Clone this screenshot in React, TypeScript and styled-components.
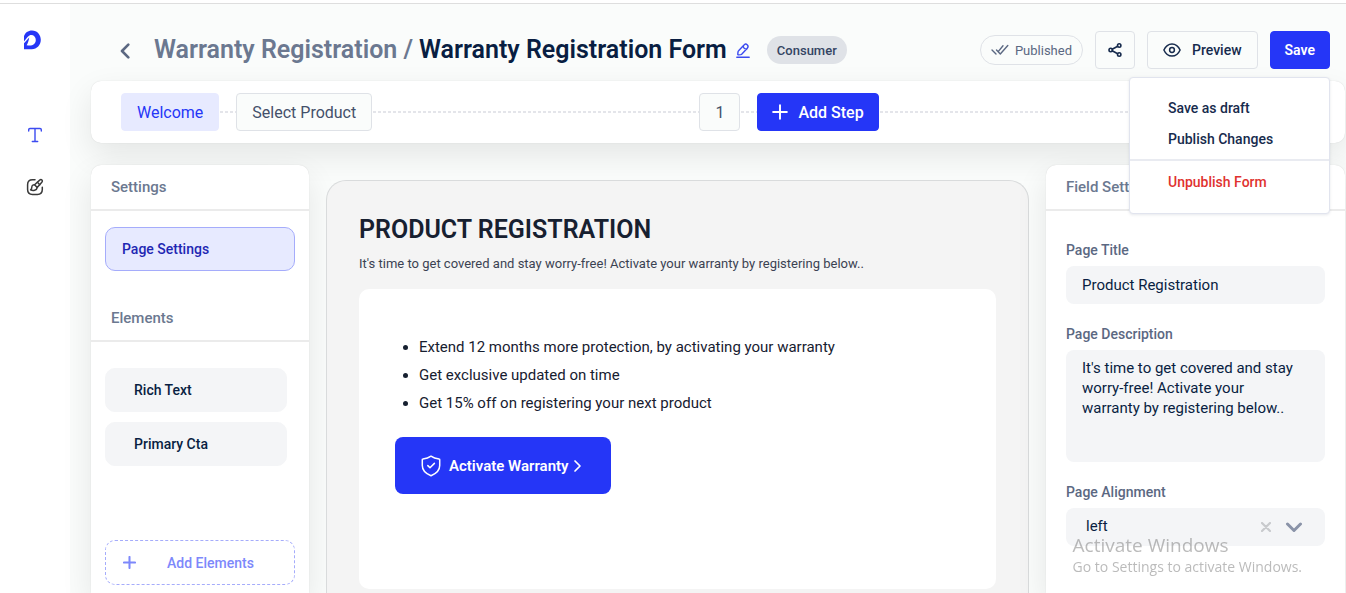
import React, { useState } from "react";
import styled, { createGlobalStyle, css } from "styled-components";

const GlobalStyle = createGlobalStyle`
  *, *::before, *::after { box-sizing: border-box; }
  body {
    margin: 0;
    background: #f5f5f5;
    font-family: Roboto, "Liberation Sans", sans-serif;
    color: #172b4d;
    overflow: hidden;
  }
  button, input, textarea, select { font-family: inherit; margin: 0; }
  h1, h2, h3, p, ul { margin: 0; padding: 0; }
`;

const Page = styled.div`
  height: 100vh;
  display: flex;
  flex-direction: column;
  background: #fff;
`;

const TopLine = styled.div`
  flex: none;
  height: 4px;
  border-bottom: 1px solid #dedede;
`;

const Shell = styled.div`
  flex: 1;
  min-height: 0;
  display: flex;
`;

const Sidebar = styled.nav`
  flex: none;
  width: 70px;
  padding-top: 26px;
  display: flex;
  flex-direction: column;
  align-items: center;
  background: #fff;
`;

const LogoLink = styled.a`
  display: block;
  height: 20px;
  margin-bottom: 73px;
  padding-right: 4px;
`;

const NavButton = styled.button<{ $active?: boolean }>`
  width: 24px;
  height: 24px;
  margin-bottom: 28px;
  padding: 0;
  display: grid;
  place-items: center;
  border: 0;
  background: none;
  color: ${(p) => (p.$active ? "#3c4bf0" : "#3a3a3a")};
`;

const Main = styled.main`
  flex: 1;
  min-width: 0;
  padding: 0 1px 0 21px;
  display: flex;
  flex-direction: column;
  background: #fafcfb;
`;

const Header = styled.header`
  flex: none;
  padding: 27px 15px 12px 29px;
  display: flex;
  align-items: center;
  justify-content: space-between;
`;

const Crumbs = styled.div`
  display: flex;
  align-items: center;
`;

const IconButton = styled.button`
  padding: 0;
  display: grid;
  place-items: center;
  border: 0;
  background: none;
  color: #5b6882;
`;

const BackButton = styled(IconButton)`
  margin: 2px 24px 0 0;
  width: 10px;
`;

const EditButton = styled(IconButton)`
  margin: 0 17px 0 9px;
  color: #3c4bf0;
`;

const CrumbLink = styled.a`
  margin-right: 6px;
  font-size: 25px;
  line-height: 32px;
  font-weight: 600;
  color: #6b7890;
  text-decoration: none;
  white-space: nowrap;
`;

const Title = styled.h1`
  font-size: 25px;
  line-height: 32px;
  font-weight: 600;
  color: #091e42;
  white-space: nowrap;
`;

const Tag = styled.span`
  height: 28px;
  padding: 0 10px;
  display: flex;
  align-items: center;
  border-radius: 14px;
  background: #dfe2e7;
  font-size: 13px;
  font-weight: 500;
  color: #344563;
`;

const Actions = styled.div`
  position: relative;
  display: flex;
  align-items: center;
  gap: 12px;
`;

const Status = styled.span`
  height: 30px;
  padding: 0 10px;
  display: flex;
  align-items: center;
  gap: 6px;
  border: 1px solid #dfe2e7;
  border-radius: 15px;
  font-size: 13px;
  color: #5b6882;
`;

const ActionButton = styled.button<{ $primary?: boolean }>`
  height: 38px;
  min-width: 40px;
  padding: 0 14px;
  display: flex;
  align-items: center;
  justify-content: center;
  gap: 10px;
  border: 1px solid ${(p) => (p.$primary ? "#2536f7" : "#dfe2e7")};
  border-radius: 4px;
  background: ${(p) => (p.$primary ? "#2536f7" : "#fafcfb")};
  color: ${(p) => (p.$primary ? "#fff" : "#172b4d")};
  font-size: 14px;
  font-weight: ${(p) => (p.$primary ? 600 : 500)};
`;

const ShareButton = styled(ActionButton)`
  padding: 0;
`;

const PreviewButton = styled(ActionButton)`
  padding: 0 15px;
  gap: 11px;
`;

const Menu = styled.div`
  position: absolute;
  top: calc(100% + 8px);
  right: 0;
  z-index: 5;
  width: 201px;
  padding: 14px 0 16px;
  border: 1px solid #e1e4ee;
  border-radius: 4px;
  background: #fff;
  box-shadow: 0 1px 3px rgba(9, 30, 66, 0.1);
`;

const MenuItem = styled.button<{ $danger?: boolean }>`
  display: block;
  width: 100%;
  height: 31px;
  padding: 0 38px;
  border: 0;
  background: none;
  text-align: left;
  font-size: 14px;
  font-weight: 500;
  color: ${(p) => (p.$danger ? "#e0322f" : "#172b4d")};
`;

const MenuRule = styled.hr`
  height: 2px;
  margin: 5px 0;
  border: 0;
  background: #e9ebf1;
`;

const surface = css`
  background: #fff;
  box-shadow: 0 0 1px rgba(0, 0, 0, 0.16), 0 12px 32px rgba(0, 0, 0, 0.09);
`;

const Stepper = styled.section`
  ${surface}
  flex: none;
  height: 62px;
  padding: 0 30px;
  display: flex;
  align-items: center;
  border-radius: 10px;
`;

const Step = styled.button<{ $kind?: "active" | "add" }>`
  flex: none;
  height: 38px;
  padding: 0 15px;
  display: flex;
  align-items: center;
  gap: 10px;
  border: 1px solid #dfe2e7;
  border-radius: 4px;
  background: #fafcfb;
  color: #44506a;
  font-size: 16px;
  font-weight: 400;
  ${(p) =>
    p.$kind === "active" &&
    css`
      border-color: #e7eaff;
      background: #e7eaff;
      color: #2536f7;
    `}
  ${(p) =>
    p.$kind === "add" &&
    css`
      padding: 0 14px;
      border-color: #2536f7;
      background: #2536f7;
      color: #fff;
      font-weight: 500;
    `}
`;

const Dashes = styled.span<{ $grow?: number }>`
  flex: ${(p) => (p.$grow ? `${p.$grow} 1 0` : "0 0 17px")};
  height: 2px;
  background: repeating-linear-gradient(90deg, transparent 0 1px, #e4e5ea 1px 4px, transparent 4px 5px);
`;

const Workspace = styled.div`
  flex: 1;
  min-height: 0;
  padding-top: 22px;
  display: flex;
  align-items: stretch;
  gap: 17px;
`;

const Panel = styled.aside<{ $width: number }>`
  ${surface}
  flex: none;
  width: ${(p) => p.$width}px;
  display: flex;
  flex-direction: column;
  border-radius: 10px 10px 0 0;
  overflow: hidden;
`;

const PanelHeading = styled.h2`
  flex: none;
  height: 46px;
  padding: 0 20px;
  display: flex;
  align-items: center;
  border-bottom: 2px solid #ebebeb;
  font-size: 15px;
  font-weight: 500;
  color: #6b7890;
`;

const PanelSection = styled.div<{ $top: number; $bottom: number }>`
  padding: ${(p) => p.$top}px 14px ${(p) => p.$bottom}px;
  display: flex;
  flex-direction: column;
  gap: 10px;
`;

const ItemButton = styled.button<{ $selected?: boolean }>`
  height: 44px;
  margin-right: ${(p) => (p.$selected ? 0 : 8)}px;
  padding: 0 ${(p) => (p.$selected ? 16 : 28)}px;
  border: 1px solid ${(p) => (p.$selected ? "#a5acfb" : "#f4f5f7")};
  border-radius: 10px;
  background: ${(p) => (p.$selected ? "#e7eaff" : "#f4f5f7")};
  color: ${(p) => (p.$selected ? "#1f27b3" : "#091e42")};
  text-align: left;
  font-size: 14px;
  font-weight: 500;
`;

const AddElements = styled.button`
  height: 45px;
  padding: 0 17px;
  display: flex;
  align-items: center;
  gap: 31px;
  border: 1px dashed #a5acfb;
  border-radius: 10px;
  background: none;
  color: #7d88fb;
  font-size: 14px;
  font-weight: 500;
`;

const Canvas = styled.section`
  flex: 1;
  min-width: 0;
  margin-top: 15px;
  padding: 33px 32px 0;
  border: 1px solid #d9dbdc;
  border-bottom: 0;
  border-radius: 20px 20px 0 0;
  background: #f4f4f4;
  overflow: hidden;
`;

const CanvasTitle = styled.h2`
  font-size: 25px;
  line-height: 32px;
  font-weight: 600;
  color: #172030;
`;

const CanvasText = styled.p`
  margin: 8px 0 15px;
  font-size: 13px;
  line-height: 20px;
  color: #3b4252;
`;

const FormCard = styled.div`
  min-height: 300px;
  padding: 44px 36px;
  border-radius: 10px;
  background: #fff;
`;

const Benefits = styled.ul`
  margin-bottom: 20px;
  padding-left: 24px;
  font-size: 15px;
  line-height: 28px;
  color: #172030;
`;

const ActivateButton = styled.button`
  height: 57px;
  padding: 0 26px;
  display: flex;
  align-items: center;
  gap: 8px;
  border: 0;
  border-radius: 8px;
  background: #2536f7;
  color: #fff;
  font-size: 15px;
  font-weight: 600;
  svg:last-child { margin: 0 2px 0 -6px; }
`;

const Fields = styled.form`
  padding: 29px 20px;
  display: flex;
  flex-direction: column;
  gap: 20px;
`;

const Field = styled.div`
  display: flex;
  flex-direction: column;
  gap: 6px;
`;

const Label = styled.label`
  font-size: 14px;
  line-height: 20px;
  font-weight: 500;
  color: #5b6882;
`;

const control = css`
  width: 100%;
  border: 0;
  border-radius: 8px;
  background: #f4f5f7;
  color: #091e42;
  font-size: 15px;
  outline: none;
`;

const TextInput = styled.input`
  ${control}
  height: 38px;
  padding: 0 16px;
`;

const TextArea = styled.textarea`
  ${control}
  display: block;
  height: 112px;
  padding: 8px 24px 8px 16px;
  line-height: 20px;
  resize: none;
`;

const SelectWrap = styled.div`
  position: relative;
`;

const Select = styled.select`
  ${control}
  height: 38px;
  padding: 0 20px 3px;
  appearance: none;
`;

const SelectIcons = styled.div`
  position: absolute;
  top: 0;
  right: 22px;
  height: 38px;
  display: flex;
  align-items: center;
  gap: 14px;
  color: #8a93a8;
  pointer-events: none;
`;

const ClearButton = styled(IconButton)`
  color: #c8cacd;
  pointer-events: auto;
`;

const Watermark = styled.div`
  position: fixed;
  right: 44px;
  bottom: 16px;
  z-index: 4;
  pointer-events: none;
  font-family: "Open Sans", "Noto Sans", sans-serif;
  color: rgba(120, 120, 120, 0.5);
  white-space: nowrap;
`;

const WatermarkTitle = styled.p`
  font-size: 19px;
  line-height: 24px;
`;

const WatermarkText = styled.p`
  font-size: 14px;
  line-height: 20px;
`;

type IconProps = {
  w: number;
  h?: number;
  box: string;
  stroke?: number;
  children: React.ReactNode;
};

const Icon = ({ w, h = w, box, stroke = 1.5, children }: IconProps) => (
  <svg
    width={w}
    height={h}
    viewBox={box}
    fill="none"
    stroke="currentColor"
    strokeWidth={stroke}
    strokeLinecap="round"
    strokeLinejoin="round"
    aria-hidden="true"
  >
    {children}
  </svg>
);

const Logo = () => (
  <svg width="18" height="20" viewBox="0 0 18 20" aria-hidden="true">
    <path
      fill="#2536f7"
      fillRule="evenodd"
      d="M0 19.200V6C1.200 2.600 4 .4 8 .4c5.200 0 8.800 4.200 8.800 9.400 0 5.400-3.800 9.400-9 9.400ZM0 13.200 5.200 7.400C4.800 10.600 3.900 13.200 2.600 15.200 8 16.400 11.800 14.400 11.800 10 11.800 7 9.900 5 7.200 5 5.200 5 4.200 6.200 0 11.400Z"
    />
  </svg>
);

const TextIcon = () => (
  <Icon w={16} box="0 0 16 16" stroke={1.4}>
    <path d="M1.700 4V2.800c0-.8.5-1.300 1.300-1.300h10c.8 0 1.300.5 1.300 1.300V4M8 1.500v13M5.300 14.500h5.400" />
  </Icon>
);

const DesignIcon = () => (
  <Icon w={18} box="0 0 18 18" stroke={1.5}>
    <path d="M9 1.800H6.500C3 1.800 1.600 3.200 1.600 6.700v4.800c0 3.500 1.400 4.900 4.900 4.900h4.900c3.500 0 4.900-1.400 4.900-4.900V9.200" />
    <path d="M15.900 2.100c-.6-.7-1.500-.6-2.200 0L8.600 6.700l2.600 2.700 4.600-5.100c.6-.7.7-1.500.1-2.200Z" />
    <path d="M8.600 6.700C7 6.600 5.900 7.500 5.800 9.200c0 1-.3 1.900-1.200 2.700 2.300 1 6.300.7 6.600-2.500M11.400 4.300l2.400 2.500" />
  </Icon>
);

const PencilIcon = () => (
  <Icon w={14} h={15} box="0 0 14 15" stroke={1.4}>
    <path d="M8 2 2.600 7.700c-.3.3-.5.8-.6 1.200L1.800 11c-.1.600.3 1 .9.900l2.100-.3c.4-.1.800-.3 1.100-.6L11.300 5.200c.9-1 1.300-2.100-.1-3.400C9.900.5 8.900 1 8 2ZM7.100 3c.3 1.800 1.700 3.100 3.500 3.300M.8 14.200h12.400" />
  </Icon>
);

const DoubleCheckIcon = () => (
  <Icon w={18} h={12} box="0 0 18 12" stroke={1.4}>
    <path d="m1 6 4 4M5.500 6l3.800 4 7.500-8.500M7.200 7.600l4.800-5.800" />
  </Icon>
);

const ShareIcon = () => (
  <Icon w={14} box="0 0 14 14" stroke={1.6}>
    <circle cx="2.700" cy="7" r="1.700" />
    <circle cx="11.200" cy="2.500" r="1.700" />
    <circle cx="11.200" cy="11.500" r="1.700" />
    <path d="m4.200 6.200 5.500-2.900M4.200 7.800l5.500 2.900" />
  </Icon>
);

const EyeIcon = () => (
  <Icon w={18} h={14} box="0 0 18 14" stroke={1.5}>
    <path d="M.9 7C2.600 3.200 5.500.9 9 .9S15.400 3.200 17.100 7C15.400 10.800 12.500 13.100 9 13.100S2.600 10.800.9 7Z" />
    <circle cx="9" cy="7" r="2.400" />
  </Icon>
);

const PlusIcon = ({ size, stroke }: { size: number; stroke: number }) => (
  <Icon w={size} box="0 0 14 14" stroke={stroke}>
    <path d="M7 1v12M1 7h12" />
  </Icon>
);

const ShieldIcon = () => (
  <Icon w={20} h={22} box="0 0 20 22" stroke={1.5}>
    <path d="M10 1.200c2 1.400 4.800 2.400 8 2.700.4 0 .7.300.7.700v5.900c0 5-3.600 8.200-8.700 10.200-5.100-2-8.700-5.200-8.700-10.200V4.600c0-.4.300-.7.700-.7 3.200-.3 6-1.300 8-2.700Z" />
    <path d="m6.800 10.600 2.200 2.200 4.400-4.400" />
  </Icon>
);

const ELEMENTS = ["Rich Text", "Primary Cta"];

const BENEFITS = [
  "Extend 12 months more protection, by activating your warranty",
  "Get exclusive updated on time",
  "Get 15% off on registering your next product",
];

export default function App() {
  const [pageTitle, setPageTitle] = useState("Product Registration");
  const [description, setDescription] = useState(
    "It's time to get covered and stay worry-free! Activate your warranty by registering below.."
  );
  const [alignment, setAlignment] = useState("left");

  return (
    <>
      <GlobalStyle />
      <Page>
        <TopLine />
        <Shell>
          <Sidebar aria-label="Main">
            <LogoLink href="#" aria-label="Home">
              <Logo />
            </LogoLink>
            <NavButton $active aria-label="Content">
              <TextIcon />
            </NavButton>
            <NavButton aria-label="Design">
              <DesignIcon />
            </NavButton>
          </Sidebar>
          <Main>
            <Header>
              <Crumbs>
                <BackButton aria-label="Back">
                  <Icon w={10} h={16} box="0 0 10 16" stroke={2.6}>
                    <path d="M8.300 1.600 2 8l6.300 6.400" />
                  </Icon>
                </BackButton>
                <CrumbLink href="#">Warranty Registration /</CrumbLink>
                <Title>Warranty Registration Form</Title>
                <EditButton aria-label="Rename form">
                  <PencilIcon />
                </EditButton>
                <Tag>Consumer</Tag>
              </Crumbs>
              <Actions>
                <Status>
                  <DoubleCheckIcon />
                  Published
                </Status>
                <ShareButton aria-label="Share">
                  <ShareIcon />
                </ShareButton>
                <PreviewButton>
                  <EyeIcon />
                  Preview
                </PreviewButton>
                <ActionButton $primary>Save</ActionButton>
                <Menu>
                  <MenuItem>Save as draft</MenuItem>
                  <MenuItem>Publish Changes</MenuItem>
                  <MenuRule />
                  <MenuItem $danger>Unpublish Form</MenuItem>
                </Menu>
              </Actions>
            </Header>

            <Stepper>
              <Step $kind="active">Welcome</Step>
              <Dashes />
              <Step>Select Product</Step>
              <Dashes $grow={3} />
              <Step>1</Step>
              <Dashes />
              <Step $kind="add">
                <PlusIcon size={16} stroke={1.7} />
                Add Step
              </Step>
              <Dashes $grow={4} />
            </Stepper>

            <Workspace>
              <Panel $width={218}>
                <PanelHeading>Settings</PanelHeading>
                <PanelSection $top={16} $bottom={25}>
                  <ItemButton $selected>Page Settings</ItemButton>
                </PanelSection>
                <PanelHeading>Elements</PanelHeading>
                <PanelSection $top={26} $bottom={74}>
                  {ELEMENTS.map((name) => (
                    <ItemButton key={name}>{name}</ItemButton>
                  ))}
                </PanelSection>
                <PanelSection $top={0} $bottom={8}>
                  <AddElements>
                    <PlusIcon size={13} stroke={2.2} />
                    Add Elements
                  </AddElements>
                </PanelSection>
              </Panel>

              <Canvas>
                <CanvasTitle>PRODUCT REGISTRATION</CanvasTitle>
                <CanvasText>{description}</CanvasText>
                <FormCard>
                  <Benefits>
                    {BENEFITS.map((text) => (
                      <li key={text}>{text}</li>
                    ))}
                  </Benefits>
                  <ActivateButton>
                    <ShieldIcon />
                    Activate Warranty
                    <Icon w={12} h={14} box="0 0 12 14" stroke={1.7}>
                      <path d="m4 2 5 5-5 5" />
                    </Icon>
                  </ActivateButton>
                </FormCard>
              </Canvas>

              <Panel $width={299}>
                <PanelHeading>Field Settings</PanelHeading>
                <Fields>
                  <Field>
                    <Label htmlFor="page-title">Page Title</Label>
                    <TextInput id="page-title" value={pageTitle} onChange={(e) => setPageTitle(e.target.value)} />
                  </Field>
                  <Field>
                    <Label htmlFor="page-description">Page Description</Label>
                    <TextArea
                      id="page-description"
                      value={description}
                      onChange={(e) => setDescription(e.target.value)}
                    />
                  </Field>
                  <Field>
                    <Label htmlFor="page-alignment">Page Alignment</Label>
                    <SelectWrap>
                      <Select id="page-alignment" value={alignment} onChange={(e) => setAlignment(e.target.value)}>
                        <option value="left">left</option>
                        <option value="center">center</option>
                        <option value="right">right</option>
                      </Select>
                      <SelectIcons>
                        <ClearButton type="button" aria-label="Clear alignment" onClick={() => setAlignment("left")}>
                          <Icon w={10} box="0 0 10 10" stroke={2.2}>
                            <path d="m1 1 8 8M9 1 1 9" />
                          </Icon>
                        </ClearButton>
                        <Icon w={18} h={11} box="0 0 18 11" stroke={3}>
                          <path d="m2.500 2 6.500 6.500L15.500 2" />
                        </Icon>
                      </SelectIcons>
                    </SelectWrap>
                  </Field>
                </Fields>
              </Panel>
            </Workspace>
          </Main>
        </Shell>
      </Page>
      <Watermark>
        <WatermarkTitle>Activate Windows</WatermarkTitle>
        <WatermarkText>Go to Settings to activate Windows.</WatermarkText>
      </Watermark>
    </>
  );
}
